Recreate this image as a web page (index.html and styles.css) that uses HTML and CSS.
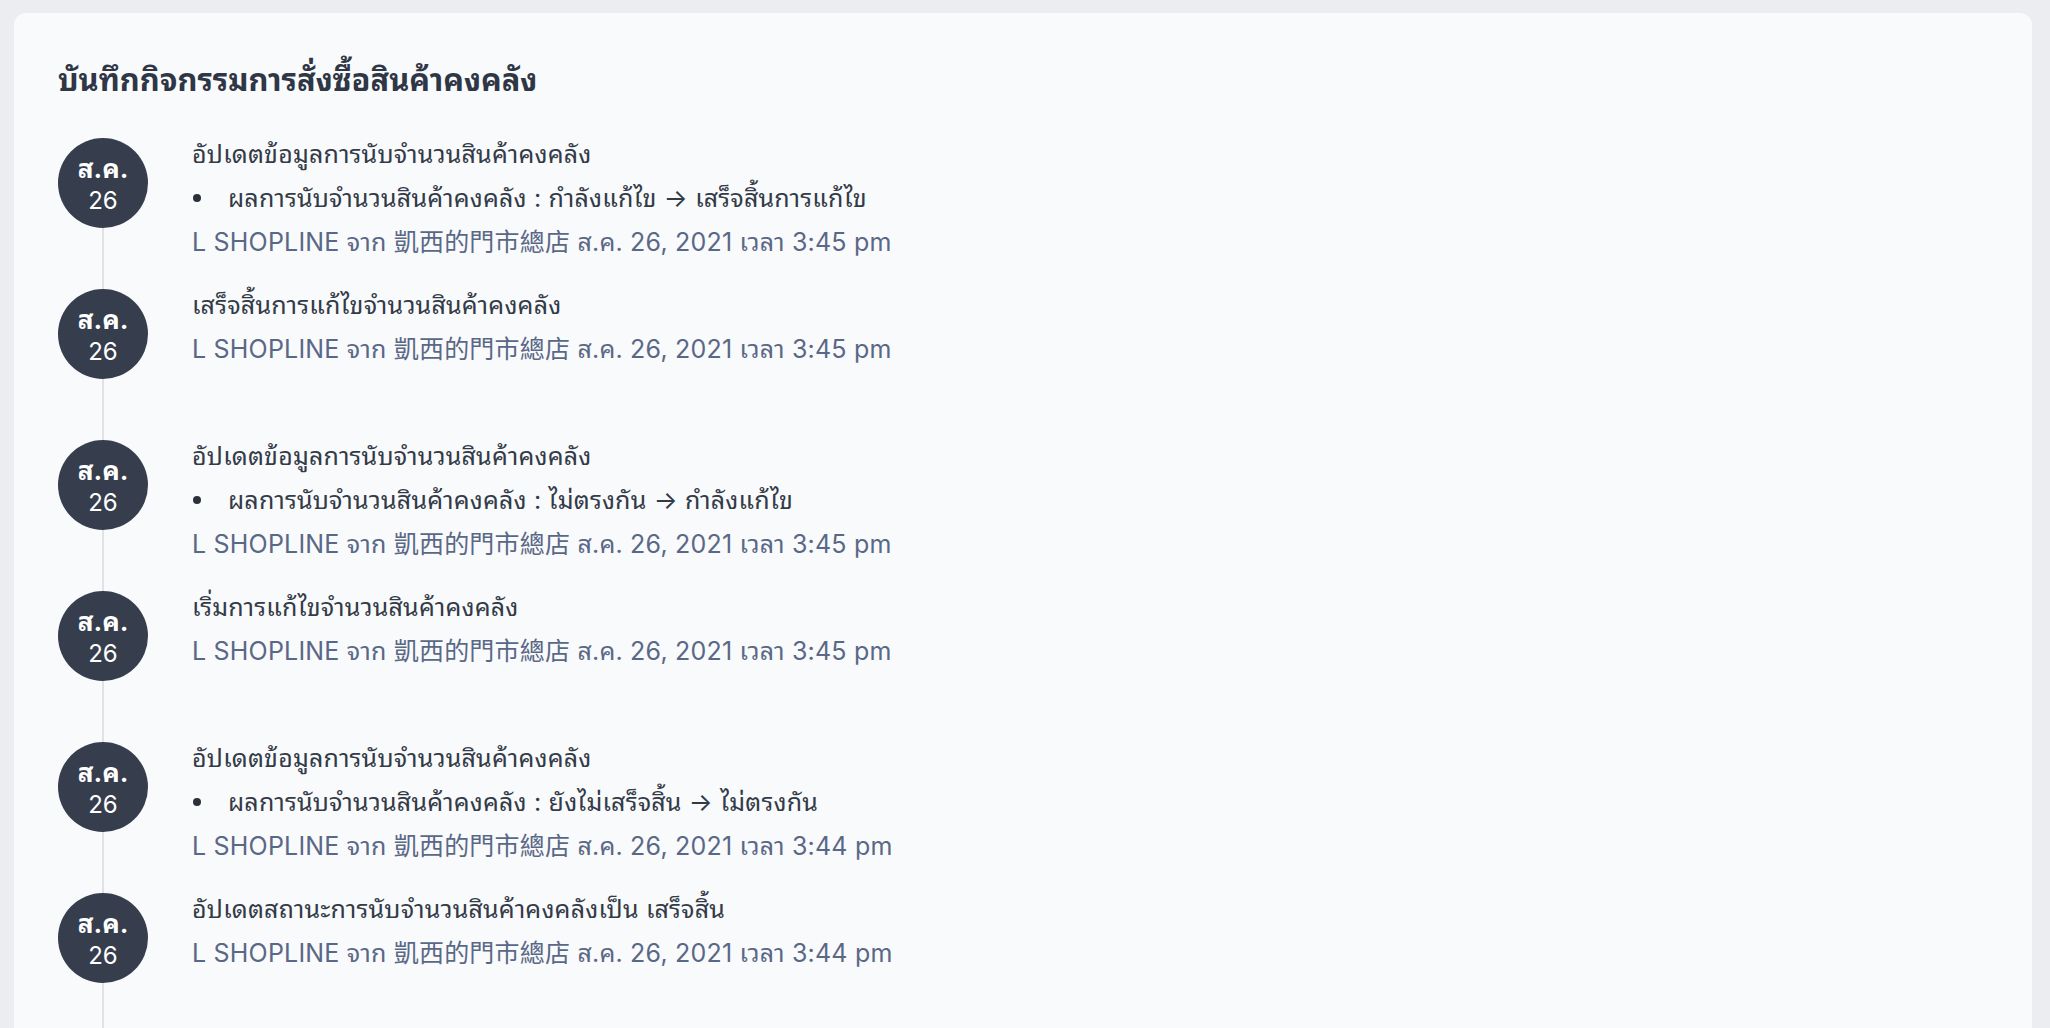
FILE: index.html
```html
<!DOCTYPE html>
<html lang="th">
<head>
    <meta charset="UTF-8">
    <meta name="viewport" content="width=device-width, initial-scale=1.0">
    <title>บันทึกกิจกรรม</title>
    <link rel="stylesheet" href="styles.css">
</head>
<body>
    <div class="card">
        <h2 class="card-title">บันทึกกิจกรรมการสั่งซื้อสินค้าคงคลัง</h2>

        <ul class="timeline">
            <li class="timeline-item">
                <div class="timeline-side">
                    <div class="date-dot"><b>ส.ค.</b><span>26</span></div>
                    <div class="timeline-line"></div>
                </div>
                <div class="timeline-body">
                    <p class="event-title">อัปเดตข้อมูลการนับจำนวนสินค้าคงคลัง</p>
                    <ul class="changes">
                        <li>ผลการนับจำนวนสินค้าคงคลัง : กำลังแก้ไข → เสร็จสิ้นการแก้ไข</li>
                    </ul>
                    <p class="event-meta">L SHOPLINE จาก 凱西的門市總店 ส.ค. 26, 2021 เวลา 3:45 pm</p>
                </div>
            </li>
            <li class="timeline-item">
                <div class="timeline-side">
                    <div class="date-dot"><b>ส.ค.</b><span>26</span></div>
                    <div class="timeline-line"></div>
                </div>
                <div class="timeline-body">
                    <p class="event-title">เสร็จสิ้นการแก้ไขจำนวนสินค้าคงคลัง</p>
                    <p class="event-meta">L SHOPLINE จาก 凱西的門市總店 ส.ค. 26, 2021 เวลา 3:45 pm</p>
                </div>
            </li>
            <li class="timeline-item">
                <div class="timeline-side">
                    <div class="date-dot"><b>ส.ค.</b><span>26</span></div>
                    <div class="timeline-line"></div>
                </div>
                <div class="timeline-body">
                    <p class="event-title">อัปเดตข้อมูลการนับจำนวนสินค้าคงคลัง</p>
                    <ul class="changes">
                        <li>ผลการนับจำนวนสินค้าคงคลัง : ไม่ตรงกัน → กำลังแก้ไข</li>
                    </ul>
                    <p class="event-meta">L SHOPLINE จาก 凱西的門市總店 ส.ค. 26, 2021 เวลา 3:45 pm</p>
                </div>
            </li>
            <li class="timeline-item">
                <div class="timeline-side">
                    <div class="date-dot"><b>ส.ค.</b><span>26</span></div>
                    <div class="timeline-line"></div>
                </div>
                <div class="timeline-body">
                    <p class="event-title">เริ่มการแก้ไขจำนวนสินค้าคงคลัง</p>
                    <p class="event-meta">L SHOPLINE จาก 凱西的門市總店 ส.ค. 26, 2021 เวลา 3:45 pm</p>
                </div>
            </li>
            <li class="timeline-item">
                <div class="timeline-side">
                    <div class="date-dot"><b>ส.ค.</b><span>26</span></div>
                    <div class="timeline-line"></div>
                </div>
                <div class="timeline-body">
                    <p class="event-title">อัปเดตข้อมูลการนับจำนวนสินค้าคงคลัง</p>
                    <ul class="changes">
                        <li>ผลการนับจำนวนสินค้าคงคลัง : ยังไม่เสร็จสิ้น → ไม่ตรงกัน</li>
                    </ul>
                    <p class="event-meta">L SHOPLINE จาก 凱西的門市總店 ส.ค. 26, 2021 เวลา 3:44 pm</p>
                </div>
            </li>
            <li class="timeline-item">
                <div class="timeline-side">
                    <div class="date-dot"><b>ส.ค.</b><span>26</span></div>
                    <div class="timeline-line"></div>
                </div>
                <div class="timeline-body">
                    <p class="event-title">อัปเดตสถานะการนับจำนวนสินค้าคงคลังเป็น เสร็จสิ้น</p>
                    <p class="event-meta">L SHOPLINE จาก 凱西的門市總店 ส.ค. 26, 2021 เวลา 3:44 pm</p>
                </div>
            </li>
        </ul>
    </div>
</body>
</html>
```

FILE: styles.css
```css
body {
    margin: 13px 18px 0 14px;
    background-color: #ebedf0;
    font-family: Inter, "Noto Sans Thai Looped", Loma, "Noto Sans Thai", "Noto Sans", "Noto Sans CJK TC", sans-serif;
    color: #333a48;
}

.card {
    background-color: #f9fafb;
    border-radius: 12px;
    padding: 47px 44px 0;
    min-height: 1100px;
}

.card-title {
    margin: 0 0 38px;
    font-size: 30.8px;
    line-height: 40px;
    font-weight: 700;
    color: #2f3746;
}

.timeline {
    list-style: none;
    margin: 0;
    padding: 0;
}

.timeline-item {
    display: flex;
    min-height: 151px;
}

.timeline-side {
    width: 90px;
    flex-shrink: 0;
    display: flex;
    flex-direction: column;
    align-items: center;
}

.date-dot {
    width: 90px;
    height: 90px;
    padding-top: 4px;
    box-sizing: border-box;
    border-radius: 50%;
    background-color: #363d4d;
    color: #fff;
    display: flex;
    flex-direction: column;
    align-items: center;
    justify-content: center;
    font-size: 24px;
    line-height: 32px;
}

.date-dot b {
    font-size: 26px;
    font-weight: 700;
}

.timeline-line {
    flex: 1;
    width: 2px;
    background-color: #dfe3e8;
}

.timeline-body {
    margin: -6px 0 0 44px;
    font-size: 25px;
    line-height: 44px;
    letter-spacing: 0.2px;
}

.event-title,
.event-meta {
    margin: 0;
}

.event-meta {
    color: #5a6887;
}

.changes {
    list-style: none;
    margin: 0;
    padding: 0;
}

.changes li {
    display: flex;
    align-items: center;
}

.changes li::before {
    content: "";
    width: 8px;
    height: 8px;
    border-radius: 50%;
    background-color: #2b303b;
    margin: 0 27px 0 1px;
}
```
